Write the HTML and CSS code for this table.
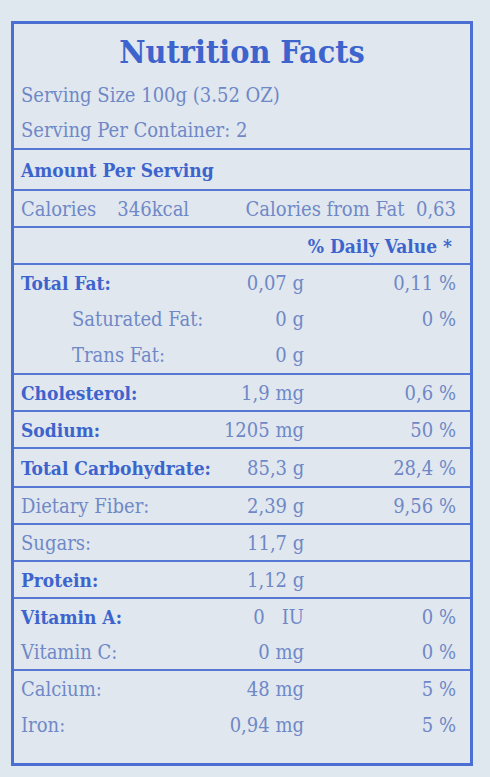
FILE: index.html
```html
<!DOCTYPE html>
<html lang="en">
<head>
    <meta charset="UTF-8">
    <meta name="viewport" content="width=device-width, initial-scale=1.0">
    <title>Nutrition Facts</title>
    <link rel="stylesheet" href="styles.css">
</head>
<body>
    <div class="label">
        <div class="head">
            <h1 class="title">Nutrition Facts</h1>
            <div class="row">Serving Size 100g (3.52 OZ)</div>
            <div class="row">Serving Per Container: 2</div>
        </div>

        <div class="group">
            <div class="row amount bold">Amount Per Serving</div>
        </div>
        <div class="group">
            <div class="row calories">
                <span>Calories</span>
                <span class="kcal">346kcal</span>
                <span class="from-fat">Calories from Fat&nbsp; 0,63</span>
            </div>
        </div>
        <div class="group">
            <div class="row dv bold">% Daily Value *</div>
        </div>

        <div class="group">
            <div class="row item bold-name"><span class="name">Total Fat:</span><span class="amt">0,07 g</span><span class="pct">0,11 %</span></div>
            <div class="row item sub"><span class="name">Saturated Fat:</span><span class="amt">0 g</span><span class="pct">0 %</span></div>
            <div class="row item sub"><span class="name">Trans Fat:</span><span class="amt">0 g</span><span class="pct"></span></div>
        </div>
        <div class="group">
            <div class="row item bold-name"><span class="name">Cholesterol:</span><span class="amt">1,9 mg</span><span class="pct">0,6 %</span></div>
        </div>
        <div class="group">
            <div class="row item bold-name"><span class="name">Sodium:</span><span class="amt">1205 mg</span><span class="pct">50 %</span></div>
        </div>
        <div class="group">
            <div class="row item bold-name carb"><span class="name">Total Carbohydrate:</span><span class="amt left">85,3 g</span><span class="pct">28,4 %</span></div>
        </div>
        <div class="group">
            <div class="row item"><span class="name">Dietary Fiber:</span><span class="amt left">2,39 g</span><span class="pct">9,56 %</span></div>
        </div>
        <div class="group">
            <div class="row item"><span class="name">Sugars:</span><span class="amt left">11,7 g</span><span class="pct"></span></div>
        </div>
        <div class="group">
            <div class="row item bold-name"><span class="name">Protein:</span><span class="amt left">1,12 g</span><span class="pct"></span></div>
        </div>

        <div class="group">
            <div class="row item bold-name"><span class="name">Vitamin A:</span><span class="amt">0&nbsp;&nbsp; IU</span><span class="pct">0 %</span></div>
            <div class="row item"><span class="name">Vitamin C:</span><span class="amt">0 mg</span><span class="pct">0 %</span></div>
        </div>
        <div class="group last">
            <div class="row item"><span class="name">Calcium:</span><span class="amt">48 mg</span><span class="pct">5 %</span></div>
            <div class="row item"><span class="name">Iron:</span><span class="amt">0,94 mg</span><span class="pct">5 %</span></div>
        </div>
    </div>
</body>
</html>
```

FILE: styles.css
```css
*{
    margin: 0;
    padding: 0;
    box-sizing: border-box;
}
body{
    background: #dfe7ef;
    font-family: 'DejaVu Serif', 'Liberation Serif', serif;
    font-stretch: condensed;
    color: #6f88c6;
}
.label{
    margin: 21px 0 0 11px;
    width: 462px;
    height: 745px;
    border: 3px solid #4a6ed2;
    background: #e0e7ef;
}
.head{
    padding: 0 0 0 7px;
}
.title{
    height: 54px;
    line-height: 56px;
    text-align: center;
    margin-left: -7px;
    font-size: 32px;
    font-weight: bold;
    color: #3d64cc;
}
.row{
    height: 35px;
    display: flex;
    align-items: center;
    font-size: 20px;
    white-space: nowrap;
}
.head .row{
    height: 36px;
    padding-bottom: 2px;
}
.head .row:last-child{
    height: 34px;
}
.group{
    border-top: 2px solid #5677d4;
    padding: 0 14px 0 7px;
}
.bold, .bold-name .name{
    font-weight: bold;
    font-size: 19px;
    color: #3d64cc;
}
.amount{
    height: 39px;
}
.calories .kcal{
    margin-left: 21px;
}
.calories .from-fat{
    margin-left: auto;
}
.dv{
    justify-content: flex-end;
    padding-right: 4px;
}
.item{
    display: grid;
    grid-template-columns: 193px 90px 1fr;
}
.item .amt{
    text-align: right;
}
.item .pct{
    text-align: right;
}
.item .amt.left{
    text-align: left;
    padding-left: 33px;
}
.group .item.sub .name{
    padding-left: 51px;
}
.group:nth-child(5) .row{
    height: 36px;
}
.carb{
    height: 37px;
}
.group:nth-child(13) .row{
    height: 36px;
}
.group.last .row{
    height: 36px;
}
```
